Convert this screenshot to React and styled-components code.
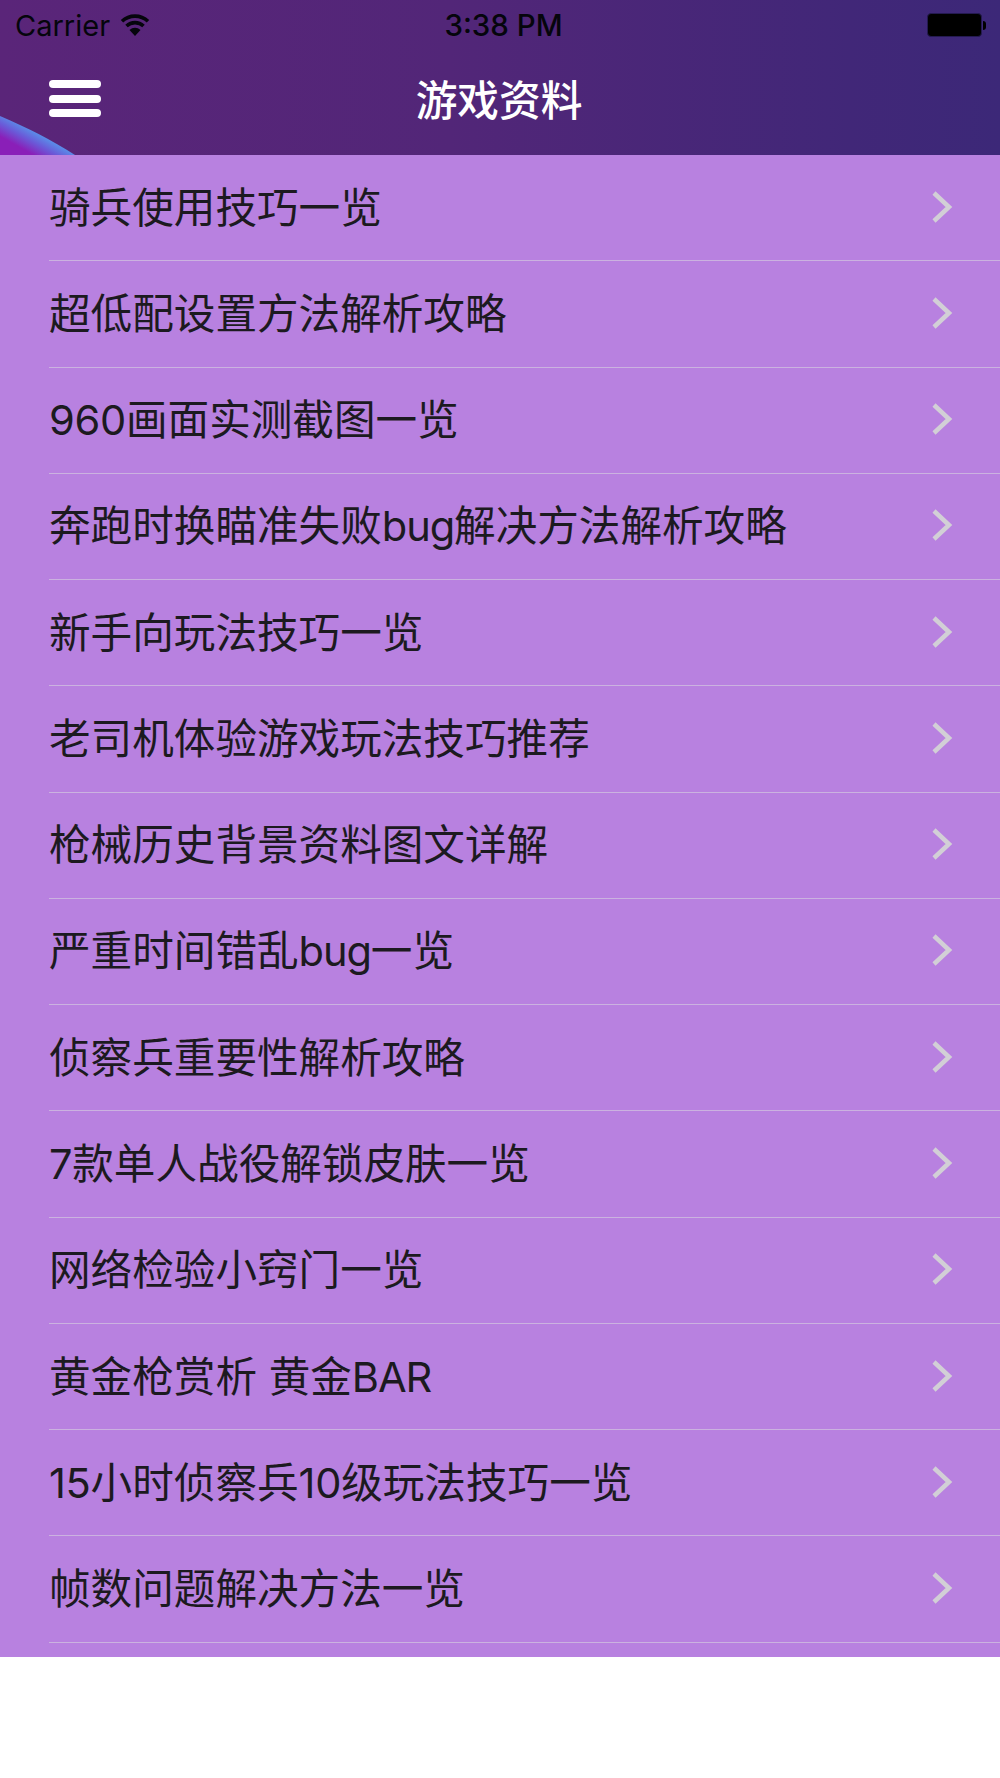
import styled, { createGlobalStyle } from 'styled-components';

const GlobalStyle = createGlobalStyle`
  html, body {
    margin: 0;
    padding: 0;
    background: #fff;
  }
  body {
    font-family: "Inter", "Noto Sans CJK SC", sans-serif;
  }
`;

const Page = styled.div`
  width: 1000px;
  height: 1778px;
  overflow: hidden;
  background: #fff;
`;

const Header = styled.header`
  position: relative;
  height: 155px;
  overflow: hidden;
  background: linear-gradient(90deg, #5a2579 0%, #522678 45%, #412778 85%, #3c2878 100%);
`;

const Swoosh = styled.svg`
  position: absolute;
  left: 0;
  bottom: 0;
`;

const StatusBar = styled.div`
  position: relative;
  height: 49px;
  box-sizing: border-box;
  display: grid;
  grid-template-columns: 1fr auto 1fr;
  align-items: center;
  padding: 1px 14px 0 15px;
  color: #05050c;
  font-size: 29px;
`;

const Carrier = styled.div`
  display: flex;
  align-items: center;
  gap: 10px;
`;

const Clock = styled.div`
  font-size: 29.5px;
  font-weight: 500;
  transform: translateX(3px);
`;

const Battery = styled.div`
  justify-self: end;
  display: flex;
  align-items: center;
  gap: 1px;
`;

const BatteryBody = styled.div`
  width: 55px;
  height: 24px;
  box-sizing: border-box;
  background: #000;
  border: 1px solid #241a50;
  border-radius: 4px;
`;

const BatteryTip = styled.div`
  width: 3px;
  height: 9px;
  background: #000;
  border-radius: 0 3px 3px 0;
`;

const NavBar = styled.div`
  position: relative;
  height: 106px;
  display: flex;
  align-items: center;
  justify-content: center;
  box-sizing: border-box;
`;

const MenuButton = styled.div`
  position: absolute;
  left: 49px;
  top: 31px;
  display: flex;
  flex-direction: column;
  gap: 6.7px;
`;

const MenuBar = styled.span`
  display: block;
  width: 52px;
  height: 8px;
  background: #fff;
  border-radius: 4px;
`;

const Title = styled.h1`
  margin: 0;
  color: #fff;
  font-size: 41.7px;
  font-weight: 500;
  line-height: 1;
  transform: translateX(-1px);
`;

const List = styled.ul`
  margin: 0;
  padding: 0 0 14.5px;
  list-style: none;
  background: #b881e0;
`;

const Row = styled.li`
  height: 106.28px;
  box-sizing: border-box;
  margin-left: 49px;
  padding-right: 47px;
  display: flex;
  align-items: center;
  justify-content: space-between;
  border-bottom: 1.5px solid #cbb2e0;
  color: #1c1a20;
  font-size: 41.6px;
  white-space: nowrap;
`;

const RowLabel = styled.span`
  padding-bottom: 6px;
`;

// latin runs sit a little tighter than Inter's default in the reference
const Latin = styled.span`
  letter-spacing: ${(p) => (p.$digits ? '-0.3px' : '-1.1px')};
`;

const Chevron = styled.svg`
  flex: none;
  margin-bottom: 2px;
`;

const items = [
  '骑兵使用技巧一览',
  '超低配设置方法解析攻略',
  '960画面实测截图一览',
  '奔跑时换瞄准失败bug解决方法解析攻略',
  '新手向玩法技巧一览',
  '老司机体验游戏玩法技巧推荐',
  '枪械历史背景资料图文详解',
  '严重时间错乱bug一览',
  '侦察兵重要性解析攻略',
  '7款单人战役解锁皮肤一览',
  '网络检验小窍门一览',
  '黄金枪赏析 黄金BAR',
  '15小时侦察兵10级玩法技巧一览',
  '帧数问题解决方法一览',
];

const splitLatin = (text) =>
  text.split(/([0-9A-Za-z]+)/).map((part, i) =>
    i % 2 === 1 ? <Latin key={i} $digits={/^[0-9]+$/.test(part)}>{part}</Latin> : part,
  );

const App = () => (
  <Page>
    <GlobalStyle />
    <Header>
      <Swoosh width="100" height="40" viewBox="0 0 100 40">
        <defs>
          <linearGradient id="swoosh" gradientUnits="userSpaceOnUse" x1="40" y1="20" x2="30" y2="38">
            <stop offset="0" stopColor="#5a8ce8" />
            <stop offset="0.45" stopColor="#6a5ad8" />
            <stop offset="1" stopColor="#8a1fb8" />
          </linearGradient>
        </defs>
        <path d="M0 1C26 12 52 25 75 40H0Z" fill="url(#swoosh)" />
      </Swoosh>
      <StatusBar>
        <Carrier>
          Carrier
          <svg width="30" height="23" viewBox="0 0 30 23">
            <path d="M15 22l-5.500-6a8 8 0 0 1 11 0z" fill="#05050c" />
            <path d="M6.500 12a12.500 12.500 0 0 1 17 0M2 7.300a19 19 0 0 1 26 0" fill="none" stroke="#05050c" strokeWidth="3.600" />
          </svg>
        </Carrier>
        <Clock>3:38 PM</Clock>
        <Battery>
          <BatteryBody />
          <BatteryTip />
        </Battery>
      </StatusBar>
      <NavBar>
        <MenuButton>
          <MenuBar />
          <MenuBar />
          <MenuBar />
        </MenuButton>
        <Title>游戏资料</Title>
      </NavBar>
    </Header>
    <List>
      {items.map((item) => (
        <Row key={item}>
          <RowLabel>{splitLatin(item)}</RowLabel>
          <Chevron width="22" height="34" viewBox="0 0 22 34">
            <path d="M3 3l15 14L3 31" fill="none" stroke="#d2cfd6" strokeWidth="4.500" />
          </Chevron>
        </Row>
      ))}
    </List>
  </Page>
);

export default App;
